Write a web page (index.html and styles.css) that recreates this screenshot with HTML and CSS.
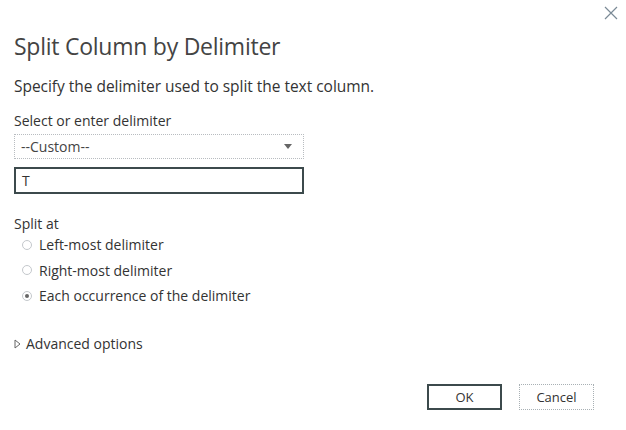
FILE: index.html
```html
<!DOCTYPE html>
<html>
<head>
<meta charset="utf-8">
<link rel="stylesheet" href="styles.css">
</head>
<body>
<div class="dialog">
  <button class="close" aria-label="Close">
    <svg width="14" height="14" viewBox="0 0 14 14"><path d="M1 1L13 13M13 1L1 13" stroke="#7a8a96" stroke-width="1.2" fill="none"/></svg>
  </button>
  <h1 class="title">Split Column by Delimiter</h1>
  <p class="desc">Specify the delimiter used to split the text column.</p>
  <label class="label">Select or enter delimiter</label>
  <div class="select">
    <span>--Custom--</span>
    <svg class="caret" width="8" height="5" viewBox="0 0 8 5"><path d="M0 0H8L4 5Z" fill="#666"/></svg>
  </div>
  <div class="textbox">T</div>
  <div class="label split">Split at</div>
  <div class="radios">
    <div class="radio"><span class="dot"></span>Left-most delimiter</div>
    <div class="radio"><span class="dot"></span>Right-most delimiter</div>
    <div class="radio"><span class="dot on"></span>Each occurrence of the delimiter</div>
  </div>
  <div class="advanced">
    <svg width="7" height="10" viewBox="0 0 7 10"><path d="M1 1L6 5L1 9Z" fill="none" stroke="#666" stroke-width="1"/></svg>
    Advanced options
  </div>
  <div class="buttons">
    <button class="btn ok">OK</button>
    <button class="btn cancel">Cancel</button>
  </div>
</div>
</body>
</html>
```
FILE: styles.css
```css
html, body {
  margin: 0;
  padding: 0;
  background: #fff;
}
body {
  font-family: "Open Sans", "Noto Sans", sans-serif;
  color: #333;
  width: 626px;
  height: 430px;
  overflow: hidden;
}
.dialog {
  position: relative;
  padding: 31px 0 0 14px;
  height: 399px;
}
.close {
  position: absolute;
  right: 8px;
  top: 6px;
  border: 0;
  background: none;
  padding: 0;
  width: 14px;
  height: 14px;
}
.title {
  margin: 0;
  font-size: 23px;
  font-weight: 400;
  color: #444;
  line-height: 30px;
  letter-spacing: -0.25px;
}
.desc {
  margin: 15px 0 0;
  font-size: 15.5px;
  line-height: 20px;
  color: #333;
  letter-spacing: -0.03px;
}
.label {
  display: block;
  margin-top: 15px;
  font-size: 14px;
  line-height: 20px;
}
.select {
  margin-top: 3px;
  box-sizing: border-box;
  width: 290px;
  height: 25px;
  border: 1px dotted #b8bcc0;
  display: flex;
  align-items: center;
  justify-content: space-between;
  padding: 0 11px 0 6px;
  font-size: 14px;
  color: #444;
}
.textbox {
  margin-top: 8px;
  box-sizing: border-box;
  width: 290px;
  height: 27px;
  border: 2px solid #3c4a4c;
  padding: 0 6px;
  font-size: 14px;
  line-height: 23px;
}
.split {
  margin-top: 20px;
}
.radios {
  margin-top: -2px;
  padding-left: 8px;
  display: flex;
  flex-direction: column;
}
.radio {
  height: 25.5px;
  display: flex;
  align-items: center;
  font-size: 14px;
}
.dot {
  box-sizing: border-box;
  width: 10px;
  height: 10px;
  border: 1px solid #c4c8cc;
  border-radius: 50%;
  margin-right: 7px;
  display: flex;
  align-items: center;
  justify-content: center;
}
.dot.on::after {
  content: "";
  width: 4px;
  height: 4px;
  border-radius: 50%;
  background: #666;
}
.advanced {
  margin-top: 25px;
  display: flex;
  align-items: center;
  gap: 5px;
  font-size: 14px;
  line-height: 20px;
}
.buttons {
  position: absolute;
  right: 32px;
  top: 384px;
  display: flex;
  gap: 17px;
}
.btn {
  box-sizing: border-box;
  width: 75px;
  height: 26px;
  background: #fff;
  font-family: "Open Sans", sans-serif;
  font-size: 13px;
  color: #333;
  padding: 0;
}
.ok {
  border: 2px solid #3c4a4c;
}
.cancel {
  border: 1px dotted #a8b0b4;
}
```
